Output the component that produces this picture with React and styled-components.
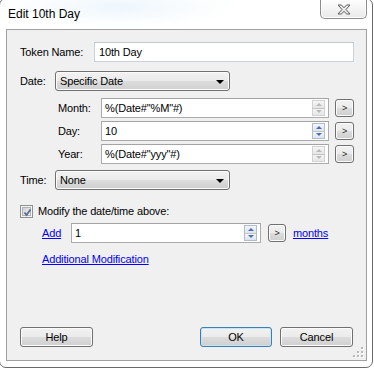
import React from 'react';
import styled, { createGlobalStyle, css } from 'styled-components';

const Global = createGlobalStyle`
  html, body { margin: 0; padding: 0; background: #ffffff; overflow: hidden; }
  body {
    width: 374px; height: 370px;
    font-family: "Liberation Sans", Arial, sans-serif;
    font-size: 11px; color: #000;
    letter-spacing: -0.15px;
  }
  * { box-sizing: border-box; }
`;

const Window = styled.div`
  width: 374px;
  height: 370px;
  margin: -2px 0 0 -1px;
  border: 1px solid #6a6a6a;
  border-radius: 7px;
  background: radial-gradient(ellipse 120px 20px at 120px 8px, #eef6fc 0%, #fbfdfe 70%, #ffffff 100%);
  display: flex;
  flex-direction: column;
  padding: 0 5px 6px 6px;
`;

const TitleBar = styled.div`
  height: 30px;
  flex: none;
  display: flex;
  justify-content: space-between;
  align-items: flex-start;
`;

const Title = styled.span`
  margin: 7px 0 0 2px;
  line-height: 16px;
  font-size: 12px;
  letter-spacing: 0;
  color: #000;
  text-shadow: 0 0 6px #fff;
`;

const CloseButton = styled.div`
  width: 47px;
  height: 20px;
  border: 1px solid #8c8c8c;
  border-top: none;
  border-radius: 0 0 5px 5px;
  background: linear-gradient(to bottom, #ffffff 0%, #f4f4f4 50%, #e9e9e9 100%);
  box-shadow: inset 0 0 0 1px rgba(255,255,255,0.9);
  display: flex;
  align-items: center;
  justify-content: center;
  padding-top: 2px;
`;

const Client = styled.div`
  position: relative;
  flex: 1;
  border: 1px solid #a0a0a0;
  background: #f0f0f0;
  padding: 12px 13px 13px 13px;
  display: flex;
  flex-direction: column;
`;

const Row = styled.div`
  display: flex;
  align-items: center;
  flex: none;
  height: ${p => p.$h ?? 20}px;
  margin-top: ${p => p.$mt ?? 0}px;
  padding-left: ${p => p.$indent ?? 0}px;
`;

const Label = styled.span`
  width: ${p => p.$w}px;
  flex: none;
  white-space: nowrap;
`;

const TextBox = styled.div`
  width: ${p => p.$w}px;
  height: 20px;
  flex: none;
  display: flex;
  align-items: center;
  background: #fff;
  border: 1px solid ${p => (p.$numeric ? '#acacac' : '#ccd2d9')};
  border-top-color: ${p => (p.$numeric ? '#a4a4a4' : '#c3c8cf')};
  padding-left: ${p => (p.$numeric ? 3 : 4)}px;
  white-space: nowrap;
`;

const win7Face = css`
  border: 1px solid #707070;
  border-radius: 3px;
  background: linear-gradient(to bottom, #f2f2f2 0%, #ebebeb 50%, #dddddd 50%, #cfcfcf 100%);
  box-shadow: inset 0 0 0 1px #fcfcfc;
`;

const Select = styled.div`
  ${win7Face};
  width: ${p => p.$w}px;
  height: 20px;
  flex: none;
  display: flex;
  align-items: center;
  justify-content: space-between;
  padding: 0 5px 0 4px;
`;

const DropArrow = styled.span`
  width: 0;
  height: 0;
  border-left: 4px solid transparent;
  border-right: 4px solid transparent;
  border-top: 4px solid #000;
  margin-top: 1px;
`;

const SmallButton = styled.div`
  ${win7Face};
  width: ${p => p.$w ?? 19}px;
  height: 18px;
  flex: none;
  margin-left: ${p => p.$ml ?? 6}px;
  display: flex;
  align-items: center;
  justify-content: center;
  font-size: 9px;
  color: #1e1e1e;
  padding-bottom: 1px;
`;

const Spinner = styled.div`
  margin-left: auto;
  margin-right: 3px;
  width: 13px;
  height: 16px;
  display: flex;
  flex-direction: column;
  flex: none;
`;

const SpinHalf = styled.div`
  flex: 1;
  display: flex;
  align-items: center;
  justify-content: center;
  border: 1px solid ${p => (p.$active ? '#b4bccb' : '#d2d2d2')};
  ${p => (p.$up ? 'border-bottom-color: #c3c3c3;' : 'border-top: none;')}
  background: ${p =>
    p.$active
      ? 'linear-gradient(to bottom, #f3f6fb, #dde4ef)'
      : 'linear-gradient(to bottom, #f6f6f6, #e6e6e6)'};
`;

const Tri = styled.span`
  width: 0;
  height: 0;
  border-left: 3px solid transparent;
  border-right: 3px solid transparent;
  ${p =>
    p.$up
      ? `border-bottom: 3px solid ${p.$active ? '#4c6bb4' : '#b9b9b9'};`
      : `border-top: 3px solid ${p.$active ? '#4c6bb4' : '#b9b9b9'};`}
`;

const CheckBox = styled.div`
  width: 13px;
  height: 13px;
  flex: none;
  border: 1px solid #8e8f8f;
  background: #f4f4f4;
  padding: 1px;
  margin-right: 5px;
  display: flex;
`;

const CheckInner = styled.div`
  flex: 1;
  border: 1px solid #aeb3b9;
  background: linear-gradient(135deg, #cbcfd5 0%, #f6f6f6 100%);
  position: relative;
`;

const Link = styled.span`
  color: #0000ff;
  text-decoration: underline;
  white-space: nowrap;
  width: ${p => (p.$w ? `${p.$w}px` : 'auto')};
  flex: none;
  margin-left: ${p => p.$ml ?? 0}px;
`;

const ButtonRow = styled.div`
  margin-top: auto;
  display: flex;
  align-items: center;
  gap: 8px;
`;

const PushButton = styled.div`
  ${win7Face};
  width: ${p => p.$w}px;
  height: 20px;
  display: flex;
  align-items: center;
  justify-content: center;
  ${p =>
    p.$default &&
    css`
      border-color: #3c7fb1;
      box-shadow: inset 0 0 0 1px #c4e5f6;
    `}
  ${p => p.$push && 'margin-left: auto;'}
`;

const Grip = styled.svg`
  position: absolute;
  right: 2px;
  bottom: 2px;
`;

function CloseX() {
  return (
    <svg width="14" height="11" viewBox="0 0 14 11">
      <polygon
        points="1,1 4.2,1 7,3.6 9.8,1 13,1 9,5.5 13,10 9.8,10 7,7.4 4.2,10 1,10 5,5.5"
        fill="#ececec"
        stroke="#5e5e5e"
        strokeWidth="1"
        strokeLinejoin="round"
      />
    </svg>
  );
}

function Spin({ active }) {
  return (
    <Spinner>
      <SpinHalf $up $active={active}>
        <Tri $up $active={active} />
      </SpinHalf>
      <SpinHalf $active={active}>
        <Tri $active={active} />
      </SpinHalf>
    </Spinner>
  );
}

function NumField({ w, value, active }) {
  return (
    <TextBox $w={w} $numeric>
      {value}
      <Spin active={active} />
    </TextBox>
  );
}

function GripDots() {
  const dots = [
    [8, 0],
    [4, 4], [8, 4],
    [0, 8], [4, 8], [8, 8],
  ];
  return (
    <Grip width="11" height="11" viewBox="0 0 11 11">
      {dots.map(([x, y], i) => (
        <g key={i}>
          <rect x={x + 1} y={y + 1} width="2" height="2" fill="#ffffff" />
          <rect x={x} y={y} width="2" height="2" fill="#b8b8b8" />
        </g>
      ))}
    </Grip>
  );
}

export default function App() {
  return (
    <>
      <Global />
      <Window>
        <TitleBar>
          <Title>Edit 10th Day</Title>
          <CloseButton>
            <CloseX />
          </CloseButton>
        </TitleBar>
        <Client>
          <Row>
            <Label $w={74}>Token Name:</Label>
            <TextBox $w={260}>10th Day</TextBox>
          </Row>
          <Row $mt={9}>
            <Label $w={35}>Date:</Label>
            <Select $w={175}>
              <span>Specific Date</span>
              <DropArrow />
            </Select>
          </Row>
          <Row $mt={7} $indent={38}>
            <Label $w={43}>Month:</Label>
            <NumField w={228} value={'%(Date#"%M"#)'} />
            <SmallButton $ml={6}>&gt;</SmallButton>
          </Row>
          <Row $mt={3} $indent={38}>
            <Label $w={43}>Day:</Label>
            <NumField w={228} value="10" active />
            <SmallButton $ml={6}>&gt;</SmallButton>
          </Row>
          <Row $mt={3} $indent={38}>
            <Label $w={43}>Year:</Label>
            <NumField w={228} value={'%(Date#"yyy"#)'} />
            <SmallButton $ml={6}>&gt;</SmallButton>
          </Row>
          <Row $mt={6}>
            <Label $w={35}>Time:</Label>
            <Select $w={175}>
              <span>None</span>
              <DropArrow />
            </Select>
          </Row>
          <Row $mt={13} $h={16}>
            <CheckBox>
              <CheckInner>
                <svg width="9" height="9" viewBox="0 0 9 9" style={{ position: 'absolute', left: 0, top: 0 }}>
                  <path d="M1.5 4.5 L3.5 7 L7.5 1.5" fill="none" stroke="#5a6c92" strokeWidth="1.8" />
                </svg>
              </CheckInner>
            </CheckBox>
            <span>Modify the date/time above:</span>
          </Row>
          <Row $mt={4} $indent={22}>
            <Link $w={29}>Add</Link>
            <NumField w={190} value="1" active />
            <SmallButton $ml={7} $w={18}>&gt;</SmallButton>
            <Link $ml={7}>months</Link>
          </Row>
          <Row $mt={9} $h={14} $indent={22}>
            <Link>Additional Modification</Link>
          </Row>
          <ButtonRow>
            <PushButton $w={73}>Help</PushButton>
            <PushButton $w={72} $default $push>OK</PushButton>
            <PushButton $w={73}>Cancel</PushButton>
          </ButtonRow>
          <GripDots />
        </Client>
      </Window>
    </>
  );
}
